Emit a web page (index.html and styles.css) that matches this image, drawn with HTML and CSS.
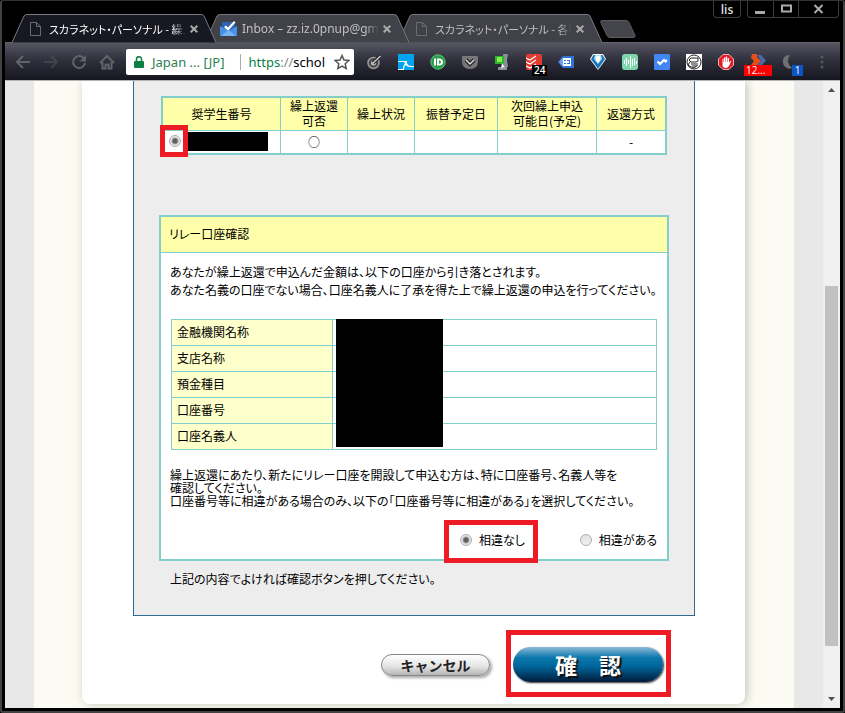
FILE: index.html
```html
<!DOCTYPE html>
<html lang="ja">
<head>
<meta charset="utf-8">
<title>スカラネット・パーソナル</title>
<link rel="stylesheet" href="styles.css">
</head>
<body>
<div class="window">
  <header class="titlebar">
    <nav class="tabs" aria-label="タブ">
      <div class="tab tab-active">
        <svg class="tab-shape" viewBox="0 0 206 29" preserveAspectRatio="none"><path d="M0 28.500H1L13 2Q14 .5 16 .5H190Q192 .5 193 2L205 28.500"/></svg>
        <svg class="page-icon" viewBox="0 0 11 14"><path d="M1 .5h5.500l4 4v9H.5V.5zM6.500.5v4h4"/></svg>
        <span class="tab-title tab-title-ja">スカラネット・パーソナル - 繰上</span>
        <button class="tab-close" aria-label="閉じる"><svg viewBox="0 0 8 8"><path d="M.7.7l6.600 6.600M7.300.7L.7 7.300"/></svg></button>
      </div>
      <div class="tab tab-second">
        <svg class="tab-shape" viewBox="0 0 206 29" preserveAspectRatio="none"><path d="M0 28.500H1L13 2Q14 .5 16 .5H190Q192 .5 193 2L205 28.500"/></svg>
        <svg class="inbox-icon" viewBox="0 0 17 16"><path fill="#2c62b8" d="M2 1h13v9H2z"/><path fill="#fff" d="M4 6l2-1.500 2 2L14 0l1.500 1.500L8 10z"/><path fill="#4a90e8" d="M0 5l8.500 5L17 5v9q0 1-1 1H1q-1 0-1-1z"/><path fill="#75b4f7" d="M1 15l7.500-6L16 15z"/></svg>
        <span class="tab-title">Inbox – zz.iz.0pnup@gma</span>
        <button class="tab-close" aria-label="閉じる"><svg viewBox="0 0 8 8"><path d="M.7.7l6.600 6.600M7.300.7L.7 7.300"/></svg></button>
      </div>
      <div class="tab tab-third">
        <svg class="tab-shape" viewBox="0 0 206 29" preserveAspectRatio="none"><path d="M0 28.500H1L13 2Q14 .5 16 .5H190Q192 .5 193 2L205 28.500"/></svg>
        <svg class="page-icon" viewBox="0 0 11 14"><path d="M1 .5h5.500l4 4v9H.5V.5zM6.500.5v4h4"/></svg>
        <span class="tab-title tab-title-ja">スカラネット・パーソナル - 各種</span>
        <button class="tab-close" aria-label="閉じる"><svg viewBox="0 0 8 8"><path d="M.7.7l6.600 6.600M7.300.7L.7 7.300"/></svg></button>
      </div>
      <button class="new-tab" aria-label="新しいタブ"><svg viewBox="0 0 36 18"><path d="M2 .5h24q2 0 3 2l6 13q.5 2-1.500 2H10q-2 0-3-2L1 3Q0 .5 2 .5z"/></svg></button>
    </nav>
    <div class="window-controls">
      <button class="profile">lis</button>
      <div class="control-group">
        <button aria-label="最小化"><svg viewBox="0 0 11 10"><path fill="#aaa" d="M0 7h10v3H0z"/></svg></button>
        <button aria-label="最大化"><svg viewBox="0 0 11 10"><path fill="none" stroke="#aaa" stroke-width="2" d="M1 1.500h9v6H1z"/></svg></button>
        <button class="control-close" aria-label="ウィンドウを閉じる"><svg viewBox="0 0 11 10"><path fill="none" stroke="#aaa" stroke-width="2" d="M1.500 1l8 8M9.500 1l-8 8"/></svg></button>
      </div>
    </div>
  </header>

  <div class="toolbar">
    <div class="nav-buttons">
      <button aria-label="戻る"><svg viewBox="0 0 16 16"><path d="M15 8H2M8 2L2 8l6 6"/></svg></button>
      <button class="dim" aria-label="進む"><svg viewBox="0 0 16 16"><path d="M1 8h13M8 2l6 6-6 6"/></svg></button>
      <button aria-label="再読み込み"><svg viewBox="0 0 16 16"><path d="M13 4.500A6 6 0 1 0 14 9"/><path fill="#626369" stroke="none" d="M15 1v6.500H8.500z"/></svg></button>
      <button aria-label="ホーム"><svg viewBox="0 0 16 16"><path d="M1 9l7-7 7 7M3.500 8v6.500h3v-4h3v4h3V8"/></svg></button>
    </div>
    <div class="address">
      <svg class="lock" viewBox="0 0 10 12"><path fill="#0b8043" d="M1 5h8q1 0 1 1v5q0 1-1 1H1q-1 0-1-1V6q0-1 1-1z"/><path fill="none" stroke="#0b8043" stroke-width="1.500" d="M2.500 5V3.200a2.500 2.500 0 0 1 5 0V5"/></svg>
      <span class="cert">Japan ... [JP]</span>
      <span class="url"><span class="url-scheme">https</span><span class="url-slash">://</span>schol</span>
      <button class="star" aria-label="ブックマーク"><svg viewBox="0 0 16 16"><path d="M8 1.500l2 4.500 4.800.5-3.600 3.200 1 4.800L8 12l-4.200 2.500 1-4.800L1.200 6.500 6 6z"/></svg></button>
    </div>
    <div class="extensions">
      <button aria-label="拡張 1"><svg viewBox="0 0 16 16"><circle cx="7.500" cy="9" r="5.500" fill="#4a4b50" stroke="#9a9a9a" stroke-width="1.500"/><circle cx="7.500" cy="9" r="2.500" fill="#bbb"/><path stroke="#222" stroke-width="3.500" d="M7 9l7-7"/><path stroke="#ccc" stroke-width="1.500" d="M6.500 9.500L14.500 2"/></svg></button>
      <button aria-label="拡張 2"><svg viewBox="0 0 16 16"><path fill="#00a4ef" d="M0 0h16v16H0z"/><path fill="#fff" d="M0 7h9v2q1 3 4 3h3v1h-4q-3 0-4-2-2 1-2 5H0v-1h5q0-4 2-5L6 8H0z"/></svg></button>
      <button aria-label="拡張 3"><svg viewBox="0 0 16 16"><circle cx="8" cy="8" r="7.200" fill="#2a9d4a" stroke="#62c47a"/><path fill="#fff" d="M4 4.500h2v7H4zM7 4.500h2q4 0 4 3.500t-4 3.500H7zM9 6.300v3.400q2 0 2-1.700T9 6.300z"/></svg></button>
      <button aria-label="拡張 4"><svg viewBox="0 0 16 16"><path fill="#77777b" d="M1 2h14q1 0 1 1v4q0 8-8 8T0 7V3q0-1 1-1z"/><path fill="none" stroke="#222" stroke-width="4" d="M4 6l4 4 4-4"/><path fill="none" stroke="#ddd" stroke-width="1.500" d="M4 6l4 4 4-4"/></svg></button>
      <button aria-label="拡張 5"><svg viewBox="0 0 16 16"><path fill="#879099" d="M9 0h5l-1 6 1 7H8l1-5zM4 13h9v3H4z"/><path fill="#2bb32b" d="M1 2h9v8H1z"/><path fill="#86e94e" d="M3 3h5v5H3z"/><path fill="#fff" d="M8 9l3 5-2-1-2 2z"/></svg></button>
      <button aria-label="拡張 6"><svg viewBox="0 0 16 16"><rect width="16" height="16" rx="2" fill="#e23b32"/><path fill="none" stroke="#fff" stroke-width="1.200" d="M0 4l4 2 6-4M0 8l4 2 6-4M0 12l4 2 6-4"/></svg><span class="badge badge-black">24</span></button>
      <button aria-label="拡張 7"><svg viewBox="0 0 16 16"><path fill="#2f72d6" d="M5 2h11v12H5l-5-6z"/><path fill="#6da5ee" d="M1 8l4-5v10z"/><path fill="#fff" d="M5 4h8v8H5z"/><path fill="#2f72d6" d="M6 6h2v1H6zM6 9h2v1H6zM9 6h3v4H9V9h2V7H9z"/></svg></button>
      <button aria-label="拡張 8"><svg viewBox="0 0 16 16"><path fill="#fff" d="M3 0h10l3 5-5 7-3 4-3-4-5-7z"/><path fill="#1976bd" d="M3.500 1h9L15 5l-7 10L1 5z"/><path fill="#b7dfef" d="M5 1h6l1 4-4 5-4-5z"/><path fill="#fff" d="M6 2h4v4L8 9 6 6z"/></svg></button>
      <button aria-label="拡張 9"><svg viewBox="0 0 16 16"><rect width="16" height="16" rx="3" fill="#7ed6ad"/><path stroke="#fff" fill="none" d="M2.500 6v4M4.500 4v8M6.500 6v4M8.500 2v12M10.500 5v7M12.500 4v7M14.500 7v3"/></svg></button>
      <button aria-label="拡張 10"><svg viewBox="0 0 16 16"><rect width="16" height="16" rx="1" fill="#4285f4"/><path fill="none" stroke="#fff" stroke-width="2" d="M3.500 7.500L6 10l4-4 1.500 1.500L13 6"/></svg></button>
      <button aria-label="拡張 11"><svg viewBox="0 0 16 16"><path fill="#fff" d="M0 0h16v16H0z"/><circle cx="8" cy="8" r="7" fill="#fff" stroke="#222"/><path fill="none" stroke="#222" d="M5 4h7v3l-2 1H5L3 6zM4 8l-2 3 5 3 4-2V9M5 10h5M6 12h4"/></svg></button>
      <button aria-label="拡張 12"><svg viewBox="0 0 16 16"><path fill="#e31b23" stroke="#f8b0b0" d="M5 .5h6L15.500 5v6L11 15.500H5L.5 11V5z"/><path fill="#fff" d="M4.500 5.500q0-1 1-1V8h.5V3.500h1.300V8h.5V2.500h1.300V8h.5V4H11v5l1-2 1 .5L11 12q-1 2-3 2-3.500 0-3.500-3z"/></svg></button>
      <button aria-label="拡張 13"><svg viewBox="0 0 16 16"><path fill="#466ba8" d="M7 1h4l5 5.500-5 5.500H7l4-5.500z"/><path fill="#e4511d" d="M2 0h5v3l4 4-4 4H1l3-4-3-3z"/></svg><span class="badge badge-red">12...</span></button>
      <button aria-label="拡張 14"><svg viewBox="0 0 16 16"><path fill="#6f7074" d="M8 1Q3 8 10 14q-2 1-5 0-5-3-4-8t7-5z"/></svg><span class="badge badge-blue">1</span></button>
      <button aria-label="メニュー"><svg viewBox="0 0 16 16"><g fill="#55565b"><circle cx="8" cy="3" r="1.500"/><circle cx="8" cy="8" r="1.500"/><circle cx="8" cy="13" r="1.500"/></g></svg></button>
    </div>
  </div>

  <div class="viewport">
    <main class="page">
      <form class="card">
        <section class="panel">
          <table class="loans">
            <colgroup><col class="c-number"><col class="c-ok"><col class="c-state"><col class="c-date"><col class="c-next"><col class="c-way"></colgroup>
            <thead>
              <tr><th>奨学生番号</th><th>繰上返還<br>可否</th><th>繰上状況</th><th>振替予定日</th><th>次回繰上申込<br>可能日(予定)</th><th>返還方式</th></tr>
            </thead>
            <tbody>
              <tr>
                <td><div class="loan-pick"><span class="marked marked-small"><input type="radio" name="loan" aria-label="奨学生番号" checked></span><span class="redacted-number"></span></div></td>
                <td>○</td><td></td><td></td><td></td><td>-</td>
              </tr>
            </tbody>
          </table>

          <section class="account">
            <h2>リレー口座確認</h2>
            <div class="account-body">
              <p class="intro">あなたが繰上返還で申込んだ金額は、以下の口座から引き落とされます。<br>あなた名義の口座でない場合、口座名義人に了承を得た上で繰上返還の申込を行ってください。</p>
              <div class="bank-wrap">
                <table class="bank">
                  <tr><th scope="row">金融機関名称</th><td></td></tr>
                  <tr><th scope="row">支店名称</th><td></td></tr>
                  <tr><th scope="row">預金種目</th><td></td></tr>
                  <tr><th scope="row">口座番号</th><td></td></tr>
                  <tr><th scope="row">口座名義人</th><td></td></tr>
                </table>
                <div class="redacted-bank"></div>
              </div>
              <p class="caution">繰上返還にあたり、新たにリレー口座を開設して申込む方は、特に口座番号、名義人等を<br>確認してください。<br>口座番号等に相違がある場合のみ、以下の「口座番号等に相違がある」を選択してください。</p>
              <div class="choices">
                <label class="marked marked-choice"><input type="radio" name="diff" checked>相違なし</label>
                <label><input type="radio" name="diff">相違がある</label>
              </div>
            </div>
          </section>
          <p class="closing">上記の内容でよければ確認ボタンを押してください。</p>
        </section>
        <div class="actions">
          <button type="button" class="cancel">キャンセル</button>
          <span class="marked marked-confirm"><button type="button" class="confirm">確　認</button></span>
        </div>
      </form>
    </main>
    <div class="scrollbar">
      <svg viewBox="0 0 7 4"><path d="M0 4l3.500-4L7 4z"/></svg>
      <div class="track"><div class="thumb"></div></div>
      <svg viewBox="0 0 7 4"><path d="M0 0l3.500 4L7 0z"/></svg>
    </div>
  </div>
</div>
</body>
</html>
```
FILE: styles.css
```css
* { box-sizing: border-box; }

body {
  margin: 0;
  background: #000;
  color: #000;
  font-family: "Noto Sans CJK JP", sans-serif;
  font-size: 12px;
  font-feature-settings: "palt";
}

h2, p { margin: 0; font-size: 12px; font-weight: 400; }

button {
  padding: 0;
  border: 0;
  background: none;
  color: inherit;
  font: inherit;
}

svg { display: block; }

.window {
  display: flex;
  flex-direction: column;
  height: 100vh;
  overflow: hidden;
  padding: 0 3px 3px;
  border: 2px solid #424242;
  border-top: 1px solid #333;
  border-radius: 3px;
}

/* Title bar and tabs */
.titlebar {
  display: flex;
  flex: none;
  justify-content: space-between;
  height: 42px;
  border-bottom: 1px solid #65666e;
}

.tabs {
  display: flex;
  align-self: flex-end;
  align-items: center;
  margin: 0 0 -1px 6px;
}

.tab {
  position: relative;
  z-index: 1;
  display: flex;
  align-items: center;
  width: 206px;
  height: 29px;
  margin-right: -13px;
  padding: 0 19px;
  color: #c0c0c2;
}

.tab-shape {
  position: absolute;
  inset: 0;
  z-index: -1;
  width: 100%;
  height: 100%;
  fill: #414249;
  stroke: #77787f;
}

.tab-second { z-index: 2; }
.tab-active { z-index: 3; color: #fff; }
.tab-active .tab-shape { fill: #171822; }

.page-icon {
  flex: none;
  width: 11px;
  height: 14px;
  margin-right: 8px;
  fill: none;
  stroke: #6b6c70;
}

.inbox-icon {
  flex: none;
  width: 17px;
  height: 16px;
  margin: 0 5px 0 -3px;
}

.tab-title {
  flex: 1;
  overflow: hidden;
  font-family: "Noto Sans", sans-serif;
  font-size: 12px;
  line-height: 20px;
  white-space: nowrap;
  mask-image: linear-gradient(to right, #000 90%, transparent);
}

.tab-title-ja { font-family: "Noto Sans CJK JP", sans-serif; font-size: 11px; }

.tab-close { flex: none; width: 8px; height: 8px; margin-left: 4px; }
.tab-close svg { fill: none; stroke: #aaa; stroke-width: 2; }

.new-tab { width: 36px; height: 18px; margin-left: 10px; }
.new-tab svg { fill: #44454b; stroke: #5b5c62; }

.window-controls { display: flex; gap: 6px; margin-right: 1px; }

.profile {
  width: 28px;
  height: 17px;
  border: 1px solid #3b3b3b;
  border-top: 0;
  border-radius: 0 0 4px 4px;
  color: #ddd;
  font: 600 12px/17px "Open Sans", sans-serif;
}

.control-group {
  display: flex;
  height: 17px;
  border: 1px solid #3b3b3b;
  border-top: 0;
  border-radius: 0 0 4px 4px;
}

.control-group button { display: grid; place-items: center; width: 25px; }
.control-group button + button { border-left: 1px solid #3b3b3b; }
.control-group .control-close { width: 40px; }
.control-group svg { width: 11px; height: 10px; }

/* Toolbar */
.toolbar {
  display: flex;
  flex: none;
  align-items: center;
  height: 38px;
  padding: 0 10px;
  border-bottom: 1px solid #b5b3b3;
  background: linear-gradient(#555662, #30313c 45%, #151620);
}

.nav-buttons { display: flex; gap: 12px; }
.nav-buttons svg { width: 16px; height: 16px; fill: none; stroke: #626369; stroke-width: 2; }
.nav-buttons .dim { opacity: .4; }

.address {
  display: flex;
  flex: 1;
  align-items: center;
  min-width: 0;
  height: 26px;
  margin: 0 12px 0 11px;
  padding: 0 4px 0 8px;
  border-radius: 2px;
  background: #fff;
  font-family: "Noto Sans", sans-serif;
  font-size: 13px;
  white-space: nowrap;
}

.lock { flex: none; width: 10px; height: 12px; margin-right: 8px; }
.cert { margin-right: 8px; padding-right: 15px; border-right: 1px solid #aaa; color: #2b8050; line-height: 16px; }
.url { flex: 1; overflow: hidden; }
.url-scheme { color: #0b8043; }
.url-slash { color: #888; }
.star svg { width: 16px; height: 16px; fill: none; stroke: #555; stroke-width: 1.5; }

.extensions { display: flex; gap: 16px; }
.extensions button { position: relative; }
.extensions svg { width: 16px; height: 16px; }

.badge {
  position: absolute;
  top: 11px;
  left: 6px;
  padding: 0 2px;
  color: #fff;
  font: 10px/11px "Open Sans", sans-serif;
}

.badge-black { background: #000; font-weight: 600; }
.badge-red { left: -6px; width: 28px; background: #f00; text-align: left; }
.badge-blue { left: 10px; width: 11px; background: #0b56c4; }

/* Page */
.viewport {
  display: flex;
  flex: 1;
  min-height: 0;
  background: #e8e8e8;
}

.page {
  flex: 1;
  margin: 0 29px;
  padding: 0 49px 0 48px;
  overflow: hidden;
  background: #fbfbf3;
}

.card {
  padding: 0 50px 7px 51px;
  border-radius: 0 0 8px 8px;
  background: #fff;
  box-shadow: 2px 0 10px #c4c4b8;
}

.panel {
  padding: 15px 25px 27px;
  border: 1px solid #2a6a94;
  border-top: 0;
  background: #ededed;
}

.loans {
  width: 506px;
  margin-left: 2px;
  border: 2px solid #83cdca;
  border-spacing: 0;
  table-layout: fixed;
}

.c-number { width: 117px; }
.c-ok, .c-state { width: 67px; }
.c-date { width: 83px; }
.c-next { width: 99px; }

.loans th, .loans td { padding: 0; line-height: 15px; text-align: center; font-weight: 400; white-space: nowrap; }
.loans th { height: 32px; padding-bottom: 2px; background: #ffffa9; }
.loans td { height: 23px; padding-bottom: 2px; border-top: 1px solid #83cdca; background: #fff; }
.loans th + th, .loans td + td { border-left: 1px solid #83cdca; }

.loan-pick { display: flex; align-items: center; padding-left: 6px; }
.redacted-number { width: 80px; height: 19px; margin-left: 7px; background: #000; }

input[type="radio"] {
  flex: none;
  appearance: none;
  width: 12px;
  height: 12px;
  margin: 0;
  border: 1px solid #adadad;
  border-radius: 50%;
  background: linear-gradient(#e2e2e2, #f2f2f2);
}

input[type="radio"]:checked { background: radial-gradient(circle, #5f5f5f 2px, #e6e6e6 4px); }

/* Red callout frames around the controls to press */
.marked { position: relative; display: flex; }
.marked::after {
  position: absolute;
  border: 5px solid #ed1c24;
  content: "";
  pointer-events: none;
}

.marked-small::after { inset: -10px -7px -10px -9px; }
.marked-choice::after { inset: -11px -13px -14px -16px; }
.marked-confirm::after { inset: -17px -8px -15px -7px; }

.account {
  margin-top: 60px;
  border: 2px solid #83cdca;
  background: #fff;
}

.account h2 {
  padding: 0 8px 2px;
  border-bottom: 1px solid #83cdca;
  background: #ffffa9;
  line-height: 33px;
}

.account-body { padding: 10px 10px 10px 9px; }
.intro { line-height: 18px; white-space: nowrap; }

.bank-wrap { position: relative; margin: 20px 0 18px 1px; }

.bank {
  width: 486px;
  border-collapse: collapse;
  table-layout: fixed;
}

.bank th, .bank td { height: 26px; padding: 0 5px 2px; border: 1px solid #83cdca; line-height: 22px; }
.bank th { width: 161px; background: #ffffcb; text-align: left; font-weight: 400; }

.redacted-bank {
  position: absolute;
  top: 0;
  left: 165px;
  width: 107px;
  height: 128px;
  background: #000;
}

.caution { line-height: 13px; white-space: nowrap; }

.choices {
  display: flex;
  justify-content: flex-end;
  gap: 55px;
  margin-top: 24px;
  line-height: 18px;
}

.choices label { display: flex; align-items: center; gap: 7px; }

.closing { margin-top: 9px; padding-left: 11px; line-height: 18px; }

.actions {
  display: flex;
  align-items: center;
  justify-content: flex-end;
  gap: 23px;
  padding: 31px 32px 15px 0;
}

.cancel {
  width: 109px;
  height: 22px;
  border: 1px solid #888;
  border-radius: 11px;
  background: linear-gradient(#fff, #e5e5e5 55%, #b5b5b5);
  box-shadow: 2px 2px 3px #aaa;
  color: #222;
  font-size: 14px;
  font-weight: 700;
  line-height: 18px;
  font-feature-settings: normal;
}

.confirm {
  width: 150px;
  height: 35px;
  border-radius: 18px;
  background: linear-gradient(#8fbad6, #0b79ae 30%, #00659a 55%, #001c3c);
  box-shadow: 1px 1px 2px #333;
  color: #fff;
  font-size: 22px;
  font-weight: 700;
  font-feature-settings: normal;
  line-height: 33px;
  text-shadow: 2px 2px 1px #111;
}

/* Scrollbar */
.scrollbar {
  display: flex;
  flex: none;
  flex-direction: column;
  align-items: center;
  width: 17px;
  padding: 7px 0;
  background: #f0f0f0;
}

.scrollbar svg { width: 7px; height: 4px; fill: #505050; }
.track { display: flex; flex: 1; flex-direction: column; justify-content: flex-end; padding-bottom: 51px; }
.thumb { width: 13px; height: 65%; background: #c1c1c1; }
```
